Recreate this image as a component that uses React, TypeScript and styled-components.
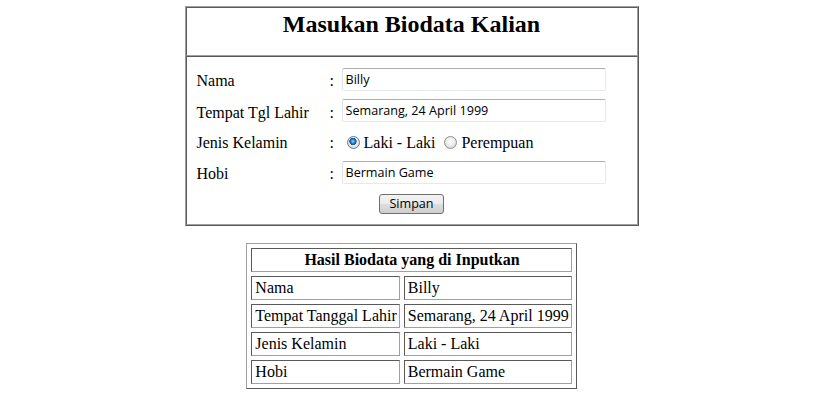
import React from 'react';
import styled, { createGlobalStyle } from 'styled-components';

const GlobalStyle = createGlobalStyle`
  body {
    margin: 0;
    background: #fff;
    font-family: "Liberation Serif", "Times New Roman", serif;
    font-size: 16px;
    color: #000;
  }
`;

const light = '#a0a0a0';
const dark = '#5a5a5a';

const Page = styled.div`
  padding: 6px 6px 0 0;
`;

const Panel = styled.div`
  width: 452px;
  margin: 0 auto;
  border: 1px solid;
  border-color: ${light} ${dark} ${dark} ${light};
`;

const Section = styled.div<{ $height: number }>`
  height: ${(p) => p.$height}px;
  box-sizing: border-box;
  border: 1px solid;
  border-color: ${dark} ${light} ${light} ${dark};
`;

const Title = styled.h2`
  margin: 0;
  padding-top: 2px;
  text-align: center;
  font-size: 24px;
  font-weight: bold;
  line-height: 28px;
`;

const FormGrid = styled.div`
  display: grid;
  grid-template-columns: 133px 12px 264px;
  grid-template-rows: 32px 31px 30px 32px 32px;
  align-items: center;
  padding: 6px 0 0 10px;
`;

const Label = styled.div`
  line-height: 18px;
  padding-top: 4px;
`;

const Colon = styled(Label)``;

const TextInput = styled.input`
  box-sizing: border-box;
  width: 264px;
  height: 23px;
  margin: 0;
  padding: 0 3px;
  border: 1px solid #e3e9ef;
  border-top-color: #abadb3;
  border-left-color: #e2e3ea;
  border-radius: 2px;
  font-family: "Open Sans", "Noto Sans", sans-serif;
  font-size: 12.6px;
  color: #000;
  outline: none;
`;

const RadioGroup = styled.div`
  display: flex;
  align-items: center;
  line-height: 18px;
  padding-top: 3px;
`;

const Radio = styled.input.attrs({ type: 'radio' })`
  appearance: none;
  box-sizing: border-box;
  width: 13px;
  height: 13px;
  margin: 0 4px 0 5px;
  border: 1px solid #8e8f8f;
  border-radius: 50%;
  background: radial-gradient(circle at 50% 40%, #ffffff 0, #f0f0f0 40%, #c8c8c8 100%);

  &:checked {
    border-color: #5c7fa4;
    background:
      radial-gradient(circle at 45% 40%, #a8defa 0, #2f86d0 1.8px, #124f8e 3.4px, transparent 3.9px),
      radial-gradient(circle at 50% 40%, #ffffff 0, #f0f0f0 40%, #c8c8c8 100%);
  }
`;

const RadioText = styled.span`
  margin-right: 4px;
`;

const ButtonCell = styled.div`
  grid-column: 1 / -1;
  display: flex;
  justify-content: center;
  padding-left: 21px;
`;

const Button = styled.button`
  height: 20px;
  padding: 0 9px;
  border: 1px solid #707070;
  border-radius: 3px;
  background: linear-gradient(#f2f2f2 0%, #ebebeb 50%, #dddddd 51%, #cfcfcf 100%);
  font-family: "Open Sans", "Noto Sans", sans-serif;
  font-size: 12.6px;
  color: #000;
  line-height: 16px;
`;

const ResultTable = styled.table`
  margin: 17px auto 0;
  border: 1px solid;
  border-color: ${light} ${dark} ${dark} ${light};
  border-spacing: 4px;
`;

const Cell = styled.td<{ $head?: boolean }>`
  border: 1px solid;
  border-color: ${dark} ${light} ${light} ${dark};
  padding: 2px 2px 2px 3px;
  line-height: 18px;
  white-space: nowrap;
  text-align: ${(p) => (p.$head ? 'center' : 'left')};
  font-weight: ${(p) => (p.$head ? 'bold' : 'normal')};
`;

const rows: [string, string][] = [
  ['Nama', 'Billy'],
  ['Tempat Tanggal Lahir', 'Semarang, 24 April 1999'],
  ['Jenis Kelamin', 'Laki - Laki'],
  ['Hobi', 'Bermain Game'],
];

export default function App() {
  return (
    <Page>
      <GlobalStyle />
      <Panel>
        <Section $height={49}>
          <Title>Masukan Biodata Kalian</Title>
        </Section>
        <Section $height={169}>
          <FormGrid>
            <Label>Nama</Label>
            <Colon>:</Colon>
            <TextInput defaultValue="Billy" />

            <Label>Tempat Tgl Lahir</Label>
            <Colon>:</Colon>
            <TextInput defaultValue="Semarang, 24 April 1999" />

            <Label>Jenis Kelamin</Label>
            <Colon>:</Colon>
            <RadioGroup>
              <Radio name="jk" defaultChecked />
              <RadioText>Laki - Laki</RadioText>
              <Radio name="jk" />
              <RadioText>Perempuan</RadioText>
            </RadioGroup>

            <Label>Hobi</Label>
            <Colon>:</Colon>
            <TextInput defaultValue="Bermain Game" />

            <ButtonCell>
              <Button>Simpan</Button>
            </ButtonCell>
          </FormGrid>
        </Section>
      </Panel>

      <ResultTable>
        <tbody>
          <tr>
            <Cell $head colSpan={2}>Hasil Biodata yang di Inputkan</Cell>
          </tr>
          {rows.map(([k, v]) => (
            <tr key={k}>
              <Cell>{k}</Cell>
              <Cell>{v}</Cell>
            </tr>
          ))}
        </tbody>
      </ResultTable>
    </Page>
  );
}
